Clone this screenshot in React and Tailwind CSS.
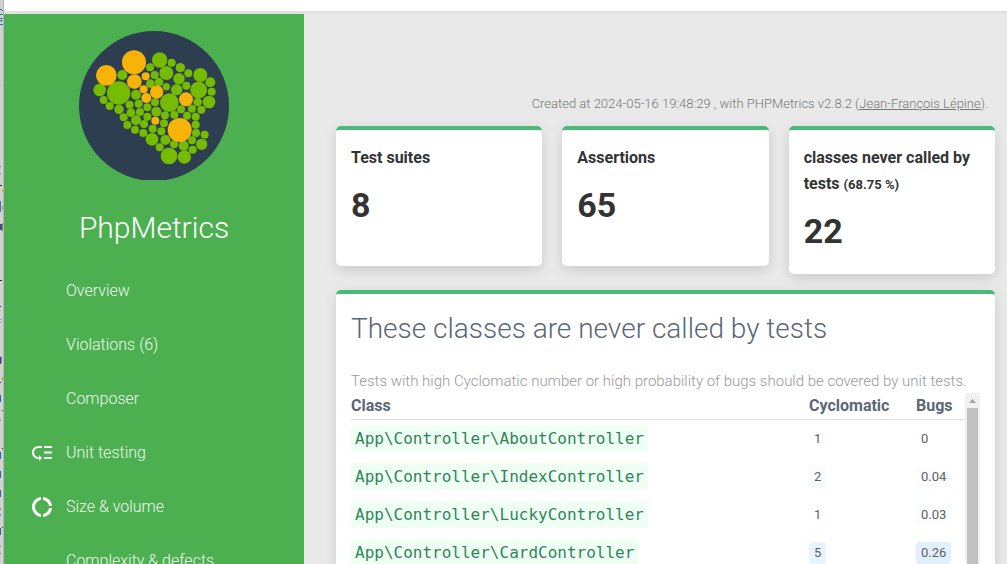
import React from "react";
import { MdLowPriority, MdDonutLarge } from "react-icons/md";

const GREEN = [
  [269, 120, 23], [240, 142, 12], [305, 128, 12], [331, 143, 14], [355, 160, 12], [391, 165, 21],
  [421, 187, 15], [425, 215, 12], [417, 246, 19], [386, 210, 25], [157, 165, 15], [254, 165, 12],
  [289, 159, 21], [327, 176, 17], [241, 191, 13], [267, 186, 13], [289, 200, 11], [349, 197, 12],
  [320, 209, 17], [89, 210, 19], [146, 219, 35], [198, 224, 15], [101, 240, 12], [119, 258, 12],
  [147, 268, 14], [179, 254, 12], [206, 251, 12], [255, 247, 12], [298, 248, 28], [383, 246, 13],
  [232, 262, 12], [259, 275, 15], [333, 268, 12], [366, 266, 12], [394, 269, 12], [161, 292, 12],
  [183, 278, 13], [210, 276, 12], [285, 286, 12], [313, 284, 12], [351, 287, 12], [377, 290, 12],
  [198, 301, 15], [232, 290, 12], [282, 310, 12], [172, 315, 12], [222, 312, 12], [195, 329, 12],
  [248, 326, 12], [377, 314, 12], [220, 339, 12], [274, 334, 12], [246, 358, 19], [378, 339, 12],
  [404, 344, 12], [286, 360, 15], [366, 361, 12], [269, 382, 12], [312, 373, 12], [341, 377, 15],
  [395, 373, 17], [368, 389, 12], [297, 408, 25], [343, 411, 20],
];
const ORANGE = [
  [192, 127, 36], [109, 166, 31], [193, 185, 22], [227, 169, 12], [221, 208, 12], [260, 216, 20],
  [229, 234, 15], [348, 238, 21], [256, 302, 12], [329, 330, 36],
];

function Logo() {
  return (
    <svg viewBox="27 33 450 447" className="h-[149px] w-[150px]" role="img" aria-label="PhpMetrics logo">
      <circle cx="252" cy="258" r="225" fill="#2d3e50" />
      {GREEN.map(([x, y, r]) => (
        <circle key={`${x}-${y}`} cx={x} cy={y} r={r} fill="#75bb00" />
      ))}
      {ORANGE.map(([x, y, r]) => (
        <circle key={`${x}-${y}`} cx={x} cy={y} r={r} fill="#f7b307" />
      ))}
    </svg>
  );
}

/* Sliver of the window that sits behind the report. */
const SPECKS = [
  [0, 9, 2, 1, "#2279b8"], [2, 10, 2, 1, "#2279b8"], [0, 14, 4, 1, "#2279b8"], [0, 18, 4, 1, "#2279b8"],
  [0, 20, 2, 1, "#2279b8"], [1, 21, 1, 1, "#2279b8"], [0, 24, 4, 1, "#2279b8"], [0, 85, 4, 1, "#bdbdbd"],
  [0, 166, 1, 1, "#4a80c0"], [0, 173, 1, 1, "#4a80c0"], [0, 185, 2, 1, "#222233"], [3, 185, 1, 1, "#555533"],
  [2, 190, 1, 2, "#c98b4a"], [3, 189, 1, 4, "#33220a"], [0, 201, 1, 11, "#4272b8"], [2, 206, 1, 4, "#c98b4a"],
  [3, 205, 1, 6, "#33220a"], [0, 224, 2, 6, "#34508f"], [2, 223, 1, 8, "#c96a22"], [3, 223, 1, 8, "#2b3b66"],
  [0, 280, 2, 1, "#222244"], [3, 280, 1, 6, "#7a3020"], [3, 299, 1, 8, "#4a2a10"], [0, 306, 1, 1, "#20209a"],
  [0, 319, 2, 1, "#7aa8d8"], [0, 322, 2, 1, "#7aa8d8"], [0, 357, 1, 7, "#7a3030"], [1, 356, 1, 7, "#5a9ad8"],
  [2, 377, 1, 4, "#c98b4a"], [3, 376, 1, 6, "#33220a"], [0, 382, 1, 1, "#20209a"], [0, 395, 1, 7, "#2a62b0"],
  [3, 397, 1, 5, "#33220a"], [2, 410, 2, 1, "#33220a"], [0, 420, 1, 1, "#4a80c0"], [3, 435, 1, 5, "#33220a"],
  [2, 448, 2, 1, "#33220a"], [0, 452, 1, 7, "#2a62b0"], [0, 471, 1, 7, "#2a62b0"], [3, 471, 1, 6, "#6a3a10"],
  [0, 490, 1, 7, "#2a62b0"], [0, 508, 1, 2, "#6a90c0"], [0, 514, 1, 2, "#6a90c0"], [2, 527, 2, 1, "#33220a"],
  [0, 528, 1, 7, "#2a62b0"], [0, 546, 1, 1, "#4a80c0"], [0, 553, 1, 1, "#4a80c0"],
];

function BackWindow() {
  return (
    <div className="w-1 shrink-0 overflow-hidden border-r border-[#b5b5b5] bg-[#d1d1d1]" aria-hidden="true">
      <svg width="4" height="564" shapeRendering="crispEdges">
        {SPECKS.map(([x, y, w, h, c]) => (
          <rect key={`${x}-${y}`} x={x} y={y} width={w} height={h} fill={c} />
        ))}
      </svg>
    </div>
  );
}

const NAV = [
  { label: "Overview" },
  { label: "Violations (6)" },
  { label: "Composer" },
  { label: "Unit testing", Icon: MdLowPriority },
  { label: "Size & volume", Icon: MdDonutLarge },
  { label: "Complexity & defects" },
];

function Sidebar() {
  return (
    <aside className="w-[300px] shrink-0 bg-[#4caf50] pt-[17px] text-white">
      <div className="flex flex-col items-center">
        <Logo />
        <h1 className="mt-6 text-[30px] leading-12 font-light">PhpMetrics</h1>
      </div>
      <nav className="mt-3">
        <ul>
          {NAV.map(({ label, Icon }) => (
            <li key={label}>
              <a href="#" className="flex h-[54px] items-center gap-3 pl-[26px] font-light">
                <span className="size-6">{Icon && <Icon className="size-6" />}</span>
                <span className="text-base text-white/90">{label}</span>
              </a>
            </li>
          ))}
        </ul>
      </nav>
    </aside>
  );
}

const CARD =
  "rounded-[5px] border-t-4 border-[#48bb78] bg-white px-[15px] pt-[15px] shadow-[0_4px_12px_rgba(0,0,0,0.13)]";

function StatCard({ title, note, value }) {
  return (
    <section className={`${CARD} min-h-[140px] pb-[19px]`}>
      <h2 className="text-base leading-[26px] font-bold">
        {title} {note && <small className="text-[13px] leading-none">{note}</small>}
      </h2>
      <p className="mt-2.5 text-[34px] leading-12 font-bold">{value}</p>
    </section>
  );
}

const ROWS = [
  { name: "App\\Controller\\AboutController", cyclo: "1", cycloBg: "", bugs: "0", bugsBg: "" },
  { name: "App\\Controller\\IndexController", cyclo: "2", cycloBg: "bg-[#f8fcff]", bugs: "0.04", bugsBg: "bg-[#fbfdff]" },
  { name: "App\\Controller\\LuckyController", cyclo: "1", cycloBg: "", bugs: "0.03", bugsBg: "bg-[#fcfdff]" },
  { name: "App\\Controller\\CardController", cyclo: "5", cycloBg: "bg-[#e6f4fe]", bugs: "0.26", bugsBg: "bg-[#e0f1fd]" },
];

function Badge({ tone, children }) {
  return (
    <span className={`inline-block rounded-[3px] px-[5px] text-[13px] leading-[22px] text-[#606060] ${tone}`}>
      {children}
    </span>
  );
}

function ClassTable() {
  return (
    <div className="flex">
      <table className="min-w-0 grow table-fixed border-collapse text-left text-[#5a6776]">
        <thead>
          <tr className="h-[26px] border-b border-[#dcdcdc] text-base leading-6 font-bold">
            <th>Class</th>
            <th className="w-[107px]">Cyclomatic</th>
            <th className="w-[49px]">Bugs</th>
          </tr>
        </thead>
        <tbody>
          {ROWS.map((r) => (
            <tr key={r.name} className="h-[38px]">
              <td className="align-middle">
                <code className="inline-block rounded-xs bg-[#f0fff4] px-1 font-['DejaVu_Sans_Mono',monospace] text-base leading-[27px] text-[#2f855a]">
                  {r.name}
                </code>
              </td>
              <td className="align-middle"><Badge tone={r.cycloBg}>{r.cyclo}</Badge></td>
              <td className="align-middle"><Badge tone={r.bugsBg}>{r.bugs}</Badge></td>
            </tr>
          ))}
        </tbody>
      </table>
      <div className="flex w-[15px] shrink-0 flex-col items-center bg-[#f1f1f1]" aria-hidden="true">
        <svg viewBox="0 0 15 15" className="size-[15px] shrink-0">
          <path d="M4 10l3.5-4L11 10z" fill="#a3a3a3" />
        </svg>
        <div className="w-[11px] grow bg-[#c1c1c1]" />
      </div>
    </div>
  );
}

export default function App() {
  return (
    <div className="flex h-screen overflow-hidden bg-[#e9e9e9] font-[Roboto,sans-serif] text-[#333]">
      <BackWindow />
      <div className="flex min-w-0 grow flex-col">
        <header className="h-3.5 shrink-0 border-b-3 border-[#e2e2e2] bg-white" />
        <div className="flex min-h-0 grow">
          <Sidebar />
          <main className="min-w-0 grow overflow-hidden pt-20 pr-3 pl-8">
            <p className="pr-[7px] text-right text-[13px] leading-5 font-light text-[#777]">
              Created at 2024-05-16 19:48:29 , with PHPMetrics v2.8.2 (
              <a href="#" className="underline">Jean-François Lépine</a>).
            </p>
            <div className="mt-3 grid grid-cols-3 items-start gap-5">
              <StatCard title="Test suites" value="8" />
              <StatCard title="Assertions" value="65" />
              <StatCard title="classes never called by tests" note="(68.75 %)" value="22" />
            </div>
            <section className={`${CARD} mt-4 pb-4`}>
              <h2 className="text-[28px] leading-10 font-light text-[#5a6776]">
                These classes are never called by tests
              </h2>
              <p className="mt-5 text-[15px] leading-6 font-light text-[#999]">
                Tests with high Cyclomatic number or high probability of bugs should be covered by unit tests.
              </p>
              <ClassTable />
            </section>
          </main>
        </div>
      </div>
    </div>
  );
}
